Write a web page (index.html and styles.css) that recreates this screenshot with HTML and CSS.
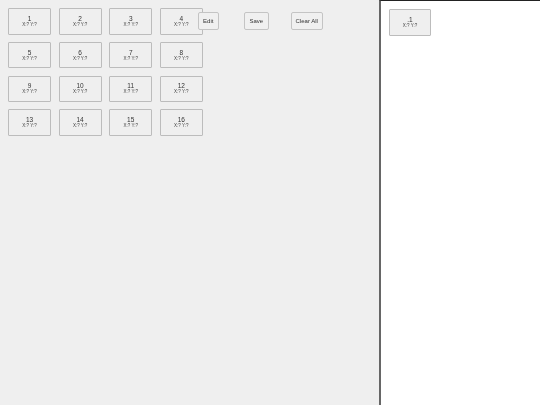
FILE: index.html
```html
<!DOCTYPE html>
<html lang="en">
<head>
    <meta charset="UTF-8">
    <meta name="viewport" content="width=device-width, initial-scale=1.0">
    <title>Slots</title>
    <link rel="stylesheet" href="styles.css">
</head>
<body>
    <div class="main">
        <div class="grid">
            <div class="slot"><span class="num">1</span><span class="pos">X:? Y:?</span></div>
            <div class="slot"><span class="num">2</span><span class="pos">X:? Y:?</span></div>
            <div class="slot"><span class="num">3</span><span class="pos">X:? Y:?</span></div>
            <div class="slot"><span class="num">4</span><span class="pos">X:? Y:?</span></div>
            <div class="slot"><span class="num">5</span><span class="pos">X:? Y:?</span></div>
            <div class="slot"><span class="num">6</span><span class="pos">X:? Y:?</span></div>
            <div class="slot"><span class="num">7</span><span class="pos">X:? Y:?</span></div>
            <div class="slot"><span class="num">8</span><span class="pos">X:? Y:?</span></div>
            <div class="slot"><span class="num">9</span><span class="pos">X:? Y:?</span></div>
            <div class="slot"><span class="num">10</span><span class="pos">X:? Y:?</span></div>
            <div class="slot"><span class="num">11</span><span class="pos">X:? Y:?</span></div>
            <div class="slot"><span class="num">12</span><span class="pos">X:? Y:?</span></div>
            <div class="slot"><span class="num">13</span><span class="pos">X:? Y:?</span></div>
            <div class="slot"><span class="num">14</span><span class="pos">X:? Y:?</span></div>
            <div class="slot"><span class="num">15</span><span class="pos">X:? Y:?</span></div>
            <div class="slot"><span class="num">16</span><span class="pos">X:? Y:?</span></div>
        </div>
        <div class="toolbar">
            <button class="btn btn-edit">Edit</button>
            <button class="btn btn-save">Save</button>
            <button class="btn btn-clear">Clear All</button>
        </div>
    </div>
    <div class="side">
        <div class="slot"><span class="num">.1</span><span class="pos">X:? Y:?</span></div>
    </div>
</body>
</html>
```

FILE: styles.css
```css
html, body {
    height: 100%;
}
body {
    margin: 0;
    display: flex;
    overflow: hidden;
    font-family: 'Liberation Sans', Arial, sans-serif;
    color: #333;
    background-color: #fff;
    filter: grayscale(1);
}
.main {
    width: 379px;
    flex-shrink: 0;
    display: flex;
    align-items: flex-start;
    padding: 8px 0 0 8px;
    box-sizing: border-box;
    background-color: #efefef;
}
.grid {
    display: grid;
    grid-template-columns: repeat(4, 43px);
    grid-auto-rows: 26.5px;
    column-gap: 7.6px;
    row-gap: 7.3px;
}
.slot {
    width: 43px;
    height: 26.5px;
    box-sizing: border-box;
    display: flex;
    flex-direction: column;
    align-items: center;
    justify-content: center;
    border: 1px solid #bcbcbc;
    border-radius: 1px;
    background-color: #efefef;
}
.num {
    font-size: 6.5px;
    line-height: 7px;
}
.pos {
    font-size: 4.5px;
    line-height: 6px;
    color: #444;
}
.toolbar {
    display: flex;
    align-items: flex-start;
    margin: 4px 0 0 -5px;
}
.btn {
    height: 18px;
    padding: 0;
    font-family: inherit;
    font-size: 6px;
    color: #333;
    background-color: #f0f0f0;
    border: 1px solid #c4c4c4;
    border-radius: 2px;
    position: relative;
}
.btn-edit {
    width: 21px;
}
.btn-save {
    width: 25px;
    margin-left: 25px;
}
.btn-clear {
    width: 32px;
    margin-left: 22px;
}
.side {
    flex: 1;
    padding: 8px 0 0 8px;
    border-left: 2px solid #666;
    border-top: 1px solid #222;
}
.side .slot {
    width: 42px;
}
```
